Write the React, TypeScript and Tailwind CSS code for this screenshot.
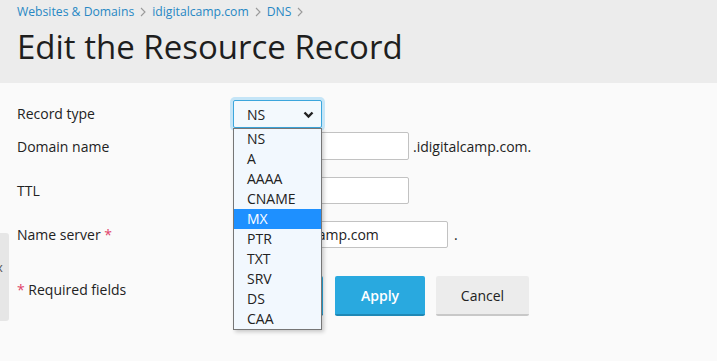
import React from "react";

const options = ["NS", "A", "AAAA", "CNAME", "MX", "PTR", "TXT", "SRV", "DS", "CAA"];

function Chevron() {
  return (
    <svg width="11" height="8" viewBox="0 0 11 8" className="absolute right-[7px] top-[10px]">
      <path d="M1.5 1.5 L5.5 5.5 L9.5 1.5" stroke="#222" strokeWidth="2.4" fill="none" />
    </svg>
  );
}

function Sep() {
  return (
    <svg width="6" height="10" viewBox="0 0 6 10" className="mx-[4px]">
      <path d="M1 1 L5 5 L1 9" stroke="#9a9a9a" strokeWidth="1.1" fill="none" />
    </svg>
  );
}

export default function App() {
  return (
    <div
      className="relative w-[717px] h-[361px] overflow-hidden bg-[#fafafa] text-[#222]"
      style={{ fontFamily: '"Open Sans", "Noto Sans", sans-serif' }}
    >
      <div className="h-[83px] bg-[#ececec] px-[17px] pt-[2px]">
        <div className="flex items-center gap-[2px] text-[12.2px] leading-[20px] text-[#2788c4]">
          <span>Websites &amp; Domains</span>
          <Sep />
          <span>idigitalcamp.com</span>
          <Sep />
          <span>DNS</span>
          <Sep />
        </div>
        <h1 className="mt-[5px] text-[33px] leading-[40px] font-medium text-[#1e1e1e]">Edit the Resource Record</h1>
      </div>

      <div className="absolute left-0 top-[233px] w-[9px] h-[88px] bg-[#e6e6e6] rounded-r-[3px] overflow-hidden">
        <span className="absolute left-[-4px] top-[27px] text-[13px] leading-[14px] text-[#555]">x</span>
      </div>

      <div className="px-[17px] pt-[17px] text-[14px]">
        <div className="flex items-center h-[28px]">
          <div className="w-[216px] -mt-[2px]">Record type</div>
          <div className="relative w-[89px] h-[28px] rounded-[2px] border border-[#3ba6dc] bg-[#f3f9fd] shadow-[0_0_0_3px_#c5e5f7] pl-[13px] flex items-center">
            NS
            <Chevron />
          </div>
        </div>

        <div className="flex items-center h-[28px] mt-[4px]">
          <div className="w-[216px]">Domain name</div>
          <div className="w-[176px] h-[28px] border border-[#c2c2c2] rounded-[2px] bg-white"></div>
          <div className="ml-[4px]">.idigitalcamp.com.</div>
        </div>

        <div className="flex items-center h-[27px] mt-[17px]">
          <div className="w-[216px]">TTL</div>
          <div className="w-[176px] h-[27px] border border-[#c2c2c2] rounded-[2px] bg-white"></div>
        </div>

        <div className="flex items-center h-[27px] mt-[17px]">
          <div className="w-[216px] -mt-[1px]">
            Name server <span className="text-[#e0436b]">*</span>
          </div>
          <div className="w-[215px] h-[27px] border border-[#c2c2c2] rounded-[2px] bg-white pl-[7px] flex items-center overflow-hidden whitespace-nowrap">
            ns1.idigitalcamp.com
          </div>
          <div className="ml-[6px]">.</div>
        </div>

        <div className="flex items-center h-[40px] mt-[28px]">
          <div className="w-[216px] -mt-[13px]">
            <span className="text-[#e0436b]">*</span> Required fields
          </div>
          <div className="flex">
            <button className="w-[90px] h-[40px] bg-[#29a9df] border-b-[2px] border-[#1f88b5] rounded-[2px] text-white font-semibold">OK</button>
            <button className="ml-[12px] w-[90px] h-[40px] bg-[#29a9df] border-b-[2px] border-[#1f88b5] rounded-[2px] text-white font-semibold">Apply</button>
            <button className="ml-[11px] w-[93px] h-[40px] bg-[#ececec] border-b-[2px] border-[#c8c8c8] rounded-[2px] text-[#222]">Cancel</button>
          </div>
        </div>
      </div>

      <div className="absolute left-[233px] top-[128px] w-[89px] h-[202px] border border-[#767676] bg-[#f2f8fe] shadow-[2px_2px_4px_rgba(0,0,0,0.2)] text-[14px] text-[#222]">
        {options.map((o) => (
          <div
            key={o}
            className={
              o === "MX"
                ? "h-[20px] leading-[20px] pl-[13px] bg-[#1e90ff] text-white"
                : "h-[20px] leading-[20px] pl-[13px]"
            }
          >
            {o}
          </div>
        ))}
      </div>
    </div>
  );
}
